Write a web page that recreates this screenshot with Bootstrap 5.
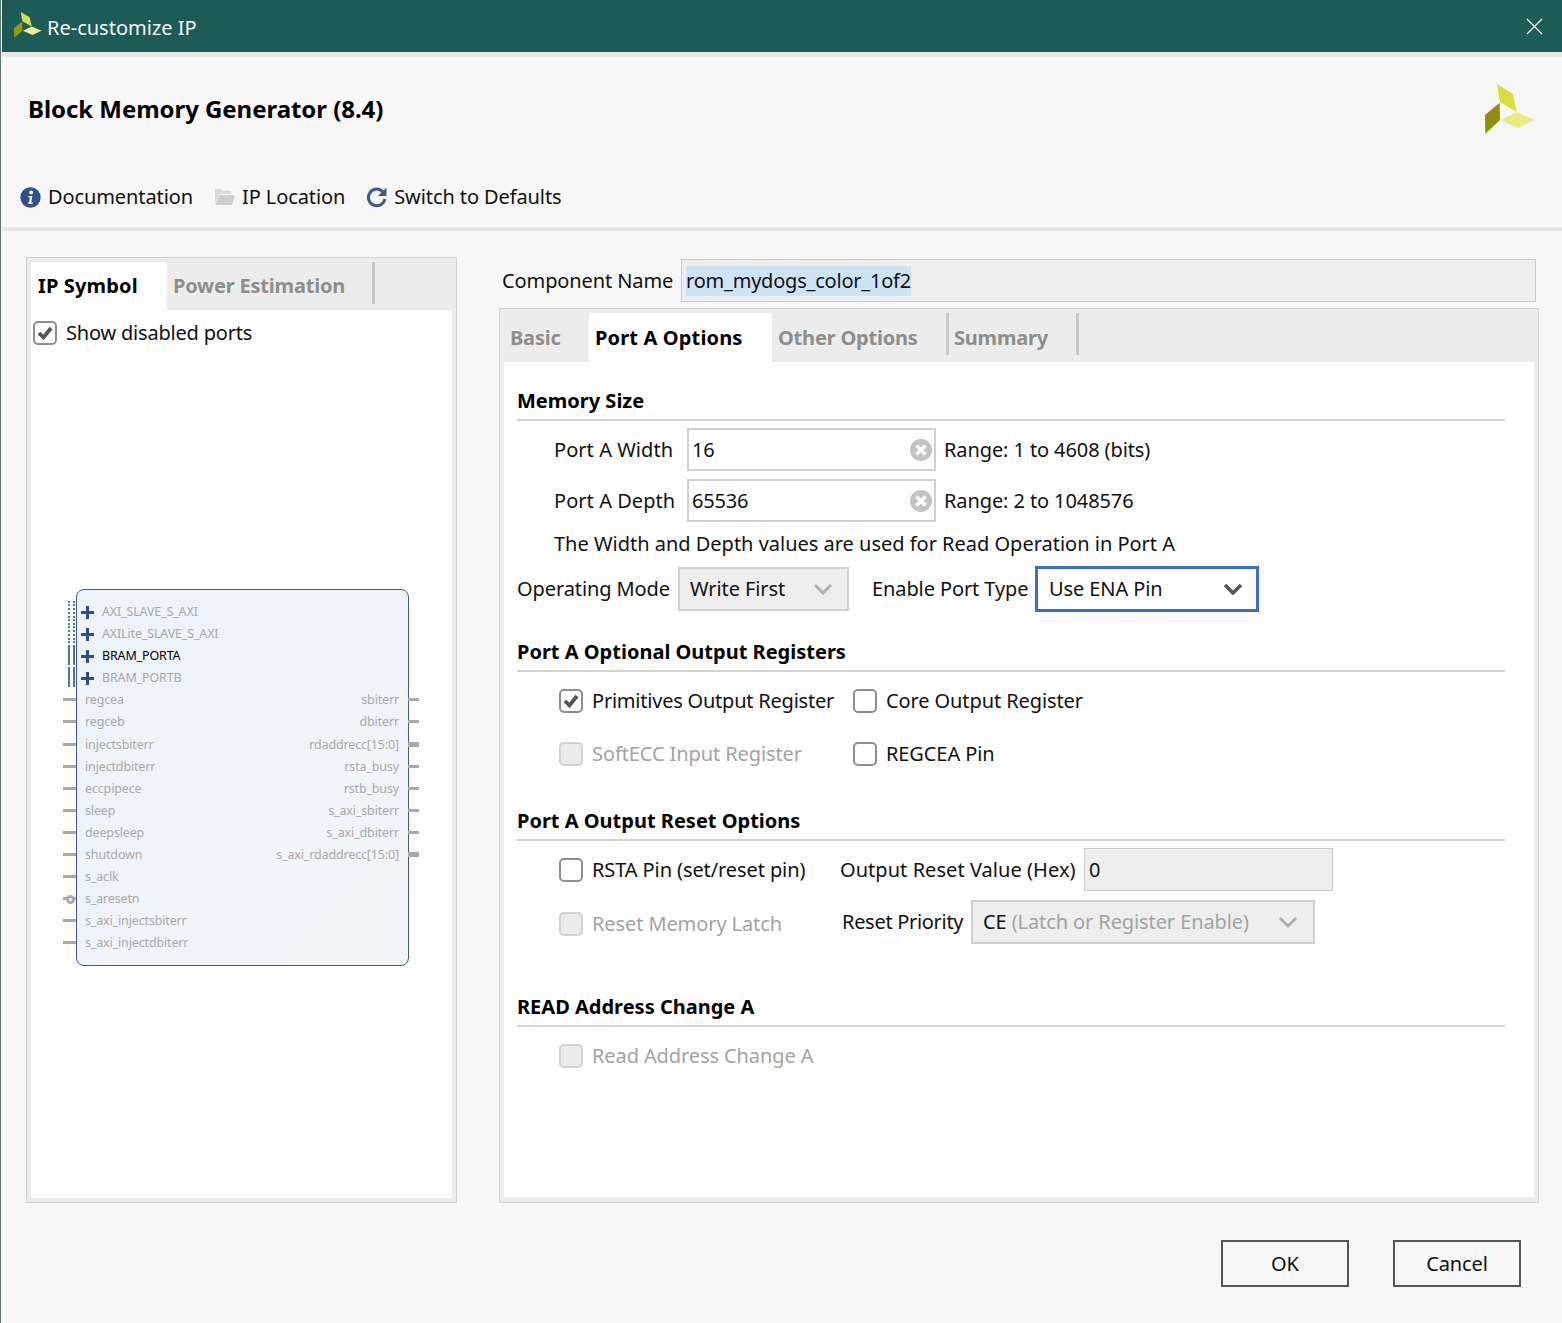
<!DOCTYPE html>
<html lang="en">
<head>
<meta charset="UTF-8" />
<meta name="viewport" content="width=device-width, initial-scale=1.0" />
<title>Re-customize IP</title>
<link rel="stylesheet" href="https://cdn.jsdelivr.net/npm/bootstrap@5.3.0/dist/css/bootstrap.min.css" />
<style>
html, body { height: 100%; }
body { margin: 0; background: #f7f7f7; color: #111; font-family: "Noto Sans", "Liberation Sans", sans-serif; font-size: 20px; letter-spacing: -0.1px; overflow: hidden; }
.dlg { height: 1323px; border-left: 1px solid #5f7371; padding-left: 1px; }
.title-bar { height: 52px; background: #1d5c56; color: #fff; padding-left: 12px; }
.title-bar .ttl { margin-left: 5px; padding-top: 3px; font-size: 20px; letter-spacing: 0; color: #f2f6f5; }
.title-logo { margin-top: -2px; }
.title-close { margin-right: 19px; }
.strip { height: 5px; background: #e8e8e8; }
.ip-head { height: 104px; padding: 0 27px 0 26px; }
.ip-head h1 { font-size: 24px; font-weight: 700; letter-spacing: -0.05px; margin: 0; color: #000; }
.tool-row { height: 70px; padding-left: 18px; padding-top: 6px; border-bottom: 4px solid #e6e6e6; }
.tool-item { margin-right: 21px; }
.tool-item svg { margin-right: 7px; }
.main-row { padding: 26px 23px 0 24px; gap: 42px; }
.panel-l { width: 431px; height: 946px; background: #ececec; border: 1px solid #d2d2d2; padding: 4px; }
.panel-r { width: 1040px; height: 895px; background: #ececec; border: 1px solid #d2d2d2; padding: 4px; margin-top: 6px; }
.col-r { width: 1040px; }
.tab-strip { height: 48px; flex-wrap: nowrap; }
.strip-r { height: 49px; }
.tab-item { height: 48px; font-weight: 700; color: #8e8e8e; font-size: 20px; padding-left: 6px; letter-spacing: -0.2px; }
.strip-r .tab-item { height: 49px; }
.tab-item.on { background: #fff; color: #000; letter-spacing: 0.15px; }
.tab-sep { border-right: 3px solid #c9c9c9; height: 42px; }
.w-sym { width: 136px; padding-left: 7px; }
.w-pow { width: 205px; }
.w-basic { width: 85px; }
.w-porta { width: 183px; }
.w-other { width: 174px; padding-left: 6px; }
.w-summ { width: 127px; padding-left: 5px; }
.tab-page { background: #fff; }
.page-l { height: 888px; }
.page-r { height: 835px; padding: 25px 29px 0 13px; }
.show-row { height: 46px; padding: 0 2px; letter-spacing: -0.2px; }
.ck-lbl { margin-left: 9px; }
.ck-tight { letter-spacing: -0.22px; }
.form-check-input.ck-box { width: 24px; height: 24px; margin: 0; float: none; flex: none; border: 2px solid #8f8f8f; border-radius: 5px; background-color: #fff; opacity: 1; }
.form-check-input.ck-box:checked[type=checkbox] { background-color: #fff; border-color: #8f8f8f; background-image: url("data:image/svg+xml,%3csvg xmlns='http://www.w3.org/2000/svg' viewBox='0 0 20 20'%3e%3cpath fill='none' stroke='%23555' stroke-width='3.8' d='M4 10l4.5 4.5L16 5'/%3e%3c/svg%3e"); }
.form-check-input.ck-box:disabled { background-color: #ebebeb; border-color: #d2d2d2; opacity: 1; }
.off-txt { color: #a3a3a3; }
.sym-box { width: 333px; height: 377px; margin: 233px 0 0 45px; border: 1px solid #3d5c9c; border-radius: 8px; background: linear-gradient(135deg, #edf4fc, #f3f4f8); padding: 11px 9px 0 8px; font-size: 12.5px; letter-spacing: -0.15px; color: #a9a9a9; }
.sym-row { position: relative; height: 22.1px; line-height: 22px; }
.bus-lbl { padding-left: 17px; }
.bus-lbl.act { color: #000; }
.bus-plus { position: relative; width: 13px; height: 13px; margin-left: -4px; flex: none; }
.bus-plus::before, .bus-plus::after { content: ""; position: absolute; background: #2f4d8a; }
.bus-plus::before { left: 0; right: 0; top: 5px; height: 3px; }
.bus-plus::after { top: 0; bottom: 0; left: 5px; width: 3px; }
.bus-tick { position: absolute; left: -17px; top: 0; width: 7px; height: 20px; }
.tick-dot { border-left: 2px dotted #4a78ab; border-right: 2px dotted #4a78ab; }
.tick-bar { border-left: 2px solid #4a78ab; border-right: 2px solid #4a78ab; }
.pin-l::before, .pin-r::after { content: ""; position: absolute; background: #a9a9a9; height: 3px; top: 9px; width: 13px; }
.pin-l::before { left: -22px; }
.pin-r::after { right: -20px; width: 11px; }
.pin-r.wide::after { height: 5px; top: 8px; }
.pin-inv { position: absolute; left: -19px; top: 7px; width: 9px; height: 9px; border: 3px solid #a9a9a9; border-radius: 50%; background: #f1f3f8; }
.cname-row { height: 43px; margin-top: 2px; padding-left: 3px; }
.fld-lbl { white-space: nowrap; }
.lbl-cname { width: 179px; }
.fld-ro { height: 43px; background: #eee; border: 1px solid #c9c9c9; padding-left: 4px; }
.w-cname { width: 855px; }
.sel-txt { background: #cfe3f7; letter-spacing: -0.22px; }
.sec-head { font-size: 20px; font-weight: 700; letter-spacing: 0; line-height: 28px; padding-bottom: 4px; border-bottom: 2px solid #d4d4d4; color: #000; }
.mt-a { margin-top: 26px; }
.mt-b { margin-top: 38px; }
.mt-c { margin-top: 49px; }
.num-row { height: 43px; padding-left: 37px; }
.mt-7px { margin-top: 7px; }
.mt-8px { margin-top: 8px; }
.num-lbl { width: 133px; letter-spacing: 0.05px; }
.num-wrap { position: relative; width: 249px; height: 43px; margin-right: 8px; }
.form-control.num-in { height: 43px; border: 2px solid #d0d0d0; border-radius: 0; padding: 0 3px; font-size: 20px; letter-spacing: -0.2px; color: #111; box-shadow: none; }
.num-clear { position: absolute; right: 4px; top: 11px; }
.note-row { height: 44px; padding-left: 37px; letter-spacing: -0.01px; }
.op-row { height: 46px; }
.lbl-op { width: 161px; }
.form-select.drop { height: 44px; border: 2px solid #d0d0d0; border-radius: 0; font-size: 20px; letter-spacing: -0.1px; color: #111; padding: 0 0 0 10px; background-size: 20px 12px; background-position: right 14px center; background-image: url("data:image/svg+xml,%3csvg xmlns='http://www.w3.org/2000/svg' viewBox='0 0 20 12'%3e%3cpath fill='none' stroke='%23b0b0b0' stroke-width='3' d='M2 2l8 8 8-8'/%3e%3c/svg%3e"); }
.form-select.drop:disabled { background-color: #eee; color: #111; }
.drop-mode { width: 171px; }
.drop-en { width: 224px; height: 46px !important; border: 3px solid #3f6fc4 !important; background-color: #fff; padding-left: 11px !important; background-position: right 13px center !important; background-image: url("data:image/svg+xml,%3csvg xmlns='http://www.w3.org/2000/svg' viewBox='0 0 20 12'%3e%3cpath fill='none' stroke='%23555' stroke-width='3.6' d='M2 2l8 8 8-8'/%3e%3c/svg%3e") !important; }
.lbl-en { width: 163px; margin-left: 23px; }
.drop-fake { width: 344px; height: 44px; background: #eee; border: 2px solid #d0d0d0; padding: 0 15px 0 10px; }
.ck-row { height: 30px; padding-left: 42px; }
.mt-14px { margin-top: 14px; }
.mt-23px { margin-top: 23px; }
.mt-9px { margin-top: 9px; }
.ck-a { width: 294px; }
.ck-b { width: 281px; }
.ck-c { width: 283px; padding-top: 3px; }
.rst-row { height: 43px; }
.rst-row2 { height: 44px; }
.lbl-rst { width: 244px; letter-spacing: 0.05px; }
.lbl-pri { width: 129px; letter-spacing: -0.3px; }
.w-rst { width: 249px; }
.btn-row { padding: 37px 41px 0 0; gap: 44px; }
.btn.dlg-btn { width: 128px; height: 47px; border: 2px solid #555; border-radius: 0; background: #f7f7f7; color: #111; font-size: 20px; letter-spacing: -0.1px; padding: 0; }
</style>
</head>
<body>
<div class="dlg">
  <div class="title-bar d-flex align-items-center">
    <svg class="title-logo" width="28" height="26" viewBox="0 0 50 50" preserveAspectRatio="none"><polygon points="12,0 28,10 31.7,28 15,18" fill="#d8dc4a"/><polygon points="31.7,28 49.3,36 33,44 16,36" fill="#eeee92"/><polygon points="14.7,18.7 15,36 0.3,49.7 0,31" fill="#9a9a10"/></svg>
    <span class="ttl">Re-customize IP</span>
    <svg class="title-close ms-auto" width="17" height="17" viewBox="0 0 17 17"><path d="M1 1l15 15M16 1L1 16" stroke="#fff" stroke-width="1.2" fill="none"/></svg>
  </div>
  <div class="strip"></div>
  <div class="ip-head d-flex align-items-center justify-content-between">
    <h1>Block Memory Generator (8.4)</h1>
    <svg width="50" height="50" viewBox="0 0 50 50"><polygon points="12,0 28,10 31.7,28 15,18" fill="#d8df3a"/><polygon points="31.7,28 49.3,36 33,44 16,36" fill="#e8ec80"/><polygon points="14.7,18.7 15,36 0.3,49.7 0,31" fill="#8f8f0a"/></svg>
  </div>
  <div class="tool-row d-flex align-items-center">
    <div class="tool-item d-flex align-items-center">
      <svg width="21" height="21" viewBox="0 0 21 21"><circle cx="10.5" cy="10.5" r="10.2" fill="#34508a"/><circle cx="11.2" cy="5.4" r="1.9" fill="#fff"/><path d="M8.4 9h4l-1.2 6.4h1.5v1.4H7.8v-1.4h1.3L9.9 10.300H8.400z" fill="#fff"/></svg>
      <span>Documentation</span>
    </div>
    <div class="tool-item d-flex align-items-center">
      <svg width="21" height="21" viewBox="0 0 21 21"><path d="M1 2h6l2 2h8v3H5L1 16z" fill="#dadada"/><path d="M5 8h16l-3 10H1z" fill="#cfcfcf"/></svg>
      <span>IP Location</span>
    </div>
    <div class="tool-item d-flex align-items-center">
      <svg width="21" height="21" viewBox="0 0 21 21"><path d="M17.300 5.300A8.300 8.300 0 1 0 18.900 12" fill="none" stroke="#3c5a8c" stroke-width="3"/><path d="M20.500 .5v8.500h-8.500z" fill="#3c5a8c"/></svg>
      <span>Switch to Defaults</span>
    </div>
  </div>
  <div class="main-row d-flex">
    <div class="panel-l">
      <ul class="nav tab-strip">
        <li class="tab-item on w-sym d-flex align-items-center">IP Symbol</li>
        <li class="tab-item w-pow d-flex align-items-center"><span>Power Estimation</span></li>
        <li class="tab-sep"></li>
      </ul>
      <div class="tab-page page-l">
        <div class="show-row d-flex align-items-center">
          <input class="form-check-input ck-box" type="checkbox" checked />
          <span class="ck-lbl">Show disabled ports</span>
        </div>
        <div class="sym-box">
          <div class="sym-row d-flex align-items-center"><span class="bus-tick tick-dot"></span><span class="bus-plus"></span><span class="bus-lbl ps-2">AXI_SLAVE_S_AXI</span></div>
          <div class="sym-row d-flex align-items-center"><span class="bus-tick tick-dot"></span><span class="bus-plus"></span><span class="bus-lbl ps-2">AXILite_SLAVE_S_AXI</span></div>
          <div class="sym-row d-flex align-items-center"><span class="bus-tick tick-bar"></span><span class="bus-plus"></span><span class="bus-lbl act ps-2">BRAM_PORTA</span></div>
          <div class="sym-row d-flex align-items-center"><span class="bus-tick tick-bar"></span><span class="bus-plus"></span><span class="bus-lbl ps-2">BRAM_PORTB</span></div>
          <div class="sym-row d-flex justify-content-between"><span class="pin-l">regcea</span><span class="pin-r">sbiterr</span></div>
          <div class="sym-row d-flex justify-content-between"><span class="pin-l">regceb</span><span class="pin-r">dbiterr</span></div>
          <div class="sym-row d-flex justify-content-between"><span class="pin-l">injectsbiterr</span><span class="pin-r wide">rdaddrecc[15:0]</span></div>
          <div class="sym-row d-flex justify-content-between"><span class="pin-l">injectdbiterr</span><span class="pin-r">rsta_busy</span></div>
          <div class="sym-row d-flex justify-content-between"><span class="pin-l">eccpipece</span><span class="pin-r">rstb_busy</span></div>
          <div class="sym-row d-flex justify-content-between"><span class="pin-l">sleep</span><span class="pin-r">s_axi_sbiterr</span></div>
          <div class="sym-row d-flex justify-content-between"><span class="pin-l">deepsleep</span><span class="pin-r">s_axi_dbiterr</span></div>
          <div class="sym-row d-flex justify-content-between"><span class="pin-l">shutdown</span><span class="pin-r wide">s_axi_rdaddrecc[15:0]</span></div>
          <div class="sym-row d-flex"><span class="pin-l">s_aclk</span></div>
          <div class="sym-row d-flex"><span class="pin-l">s_aresetn</span><span class="pin-inv"></span></div>
          <div class="sym-row d-flex"><span class="pin-l">s_axi_injectsbiterr</span></div>
          <div class="sym-row d-flex"><span class="pin-l">s_axi_injectdbiterr</span></div>
        </div>
      </div>
    </div>
    <div class="col-r">
      <div class="cname-row d-flex align-items-center">
        <span class="fld-lbl lbl-cname">Component Name</span>
        <div class="fld-ro w-cname d-flex align-items-center"><span class="sel-txt">rom_mydogs_color_1of2</span></div>
      </div>
      <div class="panel-r">
        <ul class="nav tab-strip strip-r">
          <li class="tab-item w-basic d-flex align-items-center">Basic</li>
          <li class="tab-item on w-porta d-flex align-items-center">Port A Options</li>
          <li class="tab-item w-other d-flex align-items-center">Other Options</li>
          <li class="tab-sep"></li>
          <li class="tab-item w-summ d-flex align-items-center">Summary</li>
          <li class="tab-sep"></li>
        </ul>
        <div class="tab-page page-r">
          <div class="sec-head">Memory Size</div>
          <div class="num-row mt-7px d-flex align-items-center">
            <span class="num-lbl">Port A Width</span>
            <div class="num-wrap">
              <input class="form-control num-in" type="text" value="16" />
              <svg class="num-clear" width="22" height="22" viewBox="0 0 22 22"><circle cx="11" cy="11" r="11" fill="#c4c4c4"/><path d="M6.500 6.500l9 9M15.500 6.500l-9 9" stroke="#fff" stroke-width="3.500"/></svg>
            </div>
            <span>Range: 1 to 4608 (bits)</span>
          </div>
          <div class="num-row mt-8px d-flex align-items-center">
            <span class="num-lbl">Port A Depth</span>
            <div class="num-wrap">
              <input class="form-control num-in" type="text" value="65536" />
              <svg class="num-clear" width="22" height="22" viewBox="0 0 22 22"><circle cx="11" cy="11" r="11" fill="#c4c4c4"/><path d="M6.500 6.500l9 9M15.500 6.500l-9 9" stroke="#fff" stroke-width="3.500"/></svg>
            </div>
            <span>Range: 2 to 1048576</span>
          </div>
          <div class="note-row d-flex align-items-center">The Width and Depth values are used for Read Operation in Port A</div>
          <div class="op-row d-flex align-items-center">
            <span class="fld-lbl lbl-op">Operating Mode</span>
            <select class="form-select drop drop-mode" disabled><option>Write First</option></select>
            <span class="fld-lbl lbl-en">Enable Port Type</span>
            <select class="form-select drop drop-en"><option>Use ENA Pin</option></select>
          </div>
          <div class="sec-head mt-a">Port A Optional Output Registers</div>
          <div class="ck-row mt-14px d-flex align-items-center">
            <div class="ck-a d-flex align-items-center"><input class="form-check-input ck-box" type="checkbox" checked /><span class="ck-lbl ck-tight">Primitives Output Register</span></div>
            <input class="form-check-input ck-box" type="checkbox" /><span class="ck-lbl">Core Output Register</span>
          </div>
          <div class="ck-row mt-23px d-flex align-items-center">
            <div class="ck-a d-flex align-items-center"><input class="form-check-input ck-box" type="checkbox" disabled /><span class="ck-lbl off-txt">SoftECC Input Register</span></div>
            <input class="form-check-input ck-box" type="checkbox" /><span class="ck-lbl">REGCEA Pin</span>
          </div>
          <div class="sec-head mt-b">Port A Output Reset Options</div>
          <div class="ck-row rst-row mt-7px d-flex align-items-center">
            <div class="ck-b d-flex align-items-center"><input class="form-check-input ck-box" type="checkbox" /><span class="ck-lbl">RSTA Pin (set/reset pin)</span></div>
            <span class="fld-lbl lbl-rst">Output Reset Value (Hex)</span>
            <div class="fld-ro w-rst d-flex align-items-center">0</div>
          </div>
          <div class="ck-row rst-row2 mt-9px d-flex align-items-center">
            <div class="ck-c d-flex align-items-center"><input class="form-check-input ck-box" type="checkbox" disabled /><span class="ck-lbl off-txt">Reset Memory Latch</span></div>
            <span class="fld-lbl lbl-pri">Reset Priority</span>
            <div class="drop-fake d-flex align-items-center justify-content-between">
              <span>CE <span class="off-txt">(Latch or Register Enable)</span></span>
              <svg width="20" height="12" viewBox="0 0 20 12"><path fill="none" stroke="#b0b0b0" stroke-width="3" d="M2 2l8 8 8-8"/></svg>
            </div>
          </div>
          <div class="sec-head mt-c">READ Address Change A</div>
          <div class="ck-row mt-14px d-flex align-items-center">
            <input class="form-check-input ck-box" type="checkbox" disabled /><span class="ck-lbl off-txt">Read Address Change A</span>
          </div>
        </div>
      </div>
    </div>
  </div>
  <div class="btn-row d-flex justify-content-end">
    <button type="button" class="btn dlg-btn">OK</button>
    <button type="button" class="btn dlg-btn">Cancel</button>
  </div>
</div>
<script src="https://cdn.jsdelivr.net/npm/bootstrap@5.3.0/dist/js/bootstrap.bundle.min.js"></script>
</body>
</html>
